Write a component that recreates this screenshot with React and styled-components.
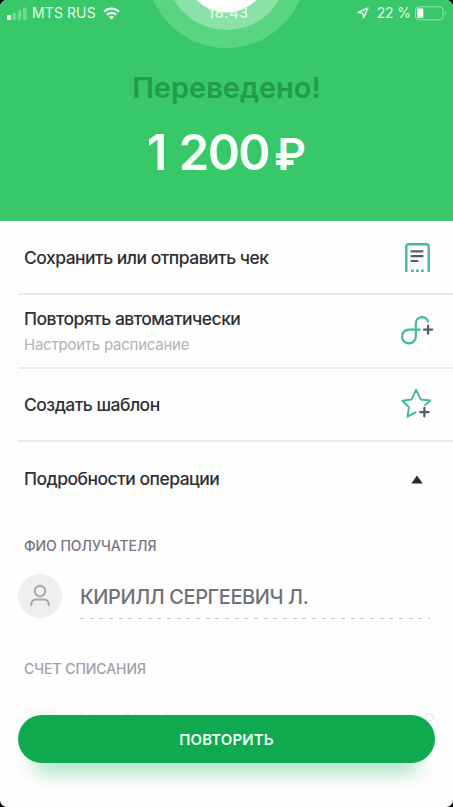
import React from 'react';
import styled, { createGlobalStyle } from 'styled-components';

const GlobalStyle = createGlobalStyle`
  * {
    box-sizing: border-box;
  }

  body {
    margin: 0;
    background: #000000;
    font-family: Inter, 'Liberation Sans', sans-serif;
  }
`;

const Screen = styled.div`
  position: relative;
  width: 453px;
  height: 807px;
  border-radius: 7px;
  overflow: hidden;
  background: #fefefe;
  display: flex;
  flex-direction: column;
`;

const Header = styled.header`
  position: relative;
  height: 221px;
  flex: none;
  background: #38c769;
  display: flex;
  flex-direction: column;
  align-items: center;
`;

const Rings = styled.svg`
  position: absolute;
  top: 0;
  left: 147px;
`;

const StatusBar = styled.div`
  position: relative;
  width: 100%;
  height: 26px;
  padding: 0 6px 0 7px;
  display: grid;
  grid-template-columns: 1fr auto 1fr;
  align-items: center;
  color: #e6fbec;
  font-size: 14px;
  line-height: 26px;
  white-space: nowrap;
`;

const StatusGroup = styled.div`
  display: flex;
  align-items: center;
  justify-content: ${(props) => props.$align || 'flex-start'};
`;

const Carrier = styled.span`
  margin: 0 7px 0 5px;
  letter-spacing: 0.1px;
`;

const Clock = styled.span`
  font-weight: 500;
  letter-spacing: 0.7px;
  margin-left: 3px;
`;

const Percent = styled.span`
  margin: 0 4px 0 8px;
  letter-spacing: -0.1px;
`;

const Title = styled.h1`
  margin: 43px 0 0;
  color: #249a4c;
  font-size: 29px;
  font-weight: 600;
  line-height: 38px;
`;

const Amount = styled.div`
  margin-top: 16px;
  color: #f6fff8;
  font-size: 49px;
  font-weight: 600;
  line-height: 60px;
  letter-spacing: -1.6px;
  word-spacing: 2px;
  white-space: nowrap;
`;

const Currency = styled.span`
  margin-left: 5px;
  font-size: 44px;
  letter-spacing: 0;
`;

const Row = styled.div`
  height: 73.75px;
  flex: none;
  margin-left: 18px;
  padding: ${(props) => (props.$last ? 0 : 2)}px 18px 0 6px;
  border-bottom: ${(props) => (props.$last ? 'none' : '2px solid #ebebeb')};
  display: flex;
  align-items: center;
  justify-content: space-between;
`;

const RowLabel = styled.div`
  color: #2f2f31;
  font-size: 17.5px;
  font-weight: 500;
  line-height: 24px;
  letter-spacing: -0.52px;
`;

const RowHint = styled.div`
  margin-top: 3px;
  color: #b3b3b3;
  font-size: 15px;
  line-height: 22px;
  letter-spacing: -0.23px;
`;

const IconBox = styled.span`
  width: 36px;
  height: 36px;
  display: flex;
  align-items: center;
  justify-content: center;
`;

const SectionTitle = styled.h2`
  margin: ${(props) => props.$top}px 0 0 24px;
  color: ${(props) => props.$color};
  font-size: 14px;
  font-weight: 500;
  line-height: 20px;
  letter-spacing: -0.05px;
`;

const Recipient = styled.div`
  display: flex;
  margin: 18px 23px 0 18px;
  height: 46px;
`;

const Avatar = styled.span`
  width: 44px;
  height: 44px;
  border-radius: 50%;
  background: #efefef;
  display: flex;
  align-items: center;
  justify-content: center;
`;

const RecipientField = styled.div`
  flex: 1;
  height: 45px;
  margin-left: 18px;
  color: #707078;
  font-size: 20px;
  font-weight: 500;
  line-height: 46px;
  letter-spacing: -0.41px;
  background: repeating-linear-gradient(90deg, #c2c2c5 0 4px, transparent 4px 9.67px) left bottom / 100% 1.5px no-repeat;
`;

const Account = styled.div`
  display: flex;
  align-items: flex-start;
  margin: 28px 18px 0 25px;
  color: #eaf0ec;
  font-size: 18px;
  line-height: 28px;
`;

const CardThumb = styled.span`
  width: 32px;
  height: 20px;
  margin: 2px 23px 0 0;
  border-radius: 3px;
  background: #f8f8f9;
`;

const AccountName = styled.span`
  flex: 1;
  letter-spacing: -0.3px;
`;

const RepeatButton = styled.button`
  position: absolute;
  left: 18px;
  bottom: 44px;
  width: 417px;
  height: 48px;
  padding: 0;
  border: none;
  border-radius: 24px;
  background: #0faa4f;
  color: #effff4;
  font-family: inherit;
  font-size: 15px;
  font-weight: 600;
  letter-spacing: 0.1px;
  box-shadow: 0 24px 20px -16px rgba(15, 170, 79, 0.45);
`;

const SignalIcon = () => (
  <svg width="20" height="13" viewBox="0 0 20 13" fill="#b9efc9">
    <rect x="0" y="8" width="4" height="5" rx="1" fill="#fff" />
    <rect x="5.5" y="5.5" width="3.7" height="7.5" rx="1" opacity="0.45" />
    <rect x="10.7" y="3" width="3.7" height="10" rx="1" opacity="0.45" />
    <rect x="16" y="0.5" width="3.7" height="12.5" rx="1" opacity="0.45" />
  </svg>
);

const WifiIcon = () => (
  <svg width="17" height="13" viewBox="0 0 17 13" fill="none" stroke="#effff4" strokeWidth="2.2">
    <path d="M1 4.6a10.8 10.8 0 0 1 15 0" />
    <path d="M3.8 7.7a6.8 6.8 0 0 1 9.4 0" />
    <path d="M5.9 9.9a3.8 3.8 0 0 1 5.2 0l-2.6 2.7z" fill="#effff4" stroke="none" />
  </svg>
);

const LocationIcon = () => (
  <svg width="12" height="12" viewBox="0 0 12 12" fill="none" stroke="#dcf9e5" strokeWidth="1.4" strokeLinejoin="round">
    <path d="M11 1L1 5.5l4.7.7L6.5 11z" />
  </svg>
);

const BatteryIcon = () => (
  <svg width="32" height="15" viewBox="0 0 32 15">
    <rect x="0.6" y="0.8" width="27.5" height="13" rx="3" fill="none" stroke="#9de5b4" />
    <rect x="2.3" y="2.6" width="6" height="9.4" rx="1" fill="#fff" />
    <path d="M30 5q2 2.3 0 4.6z" fill="#9de5b4" />
  </svg>
);

const ReceiptIcon = () => (
  <svg width="36" height="36" viewBox="0 0 36 36" fill="none">
    <path d="M7.3 32V6.5q0-2.2 2.2-2.2h18q2.2 0 2.2 2.2V32" stroke="#45b99c" strokeWidth="2.4" />
    <path d="M12.5 11.3h11M12.5 16.2h11M12.5 21h6" stroke="#565a6e" strokeWidth="2.2" strokeLinecap="round" />
    <path d="M12 30.8h2.7M17 30.8h2.7M22 30.8h2.7" stroke="#45b99c" strokeWidth="2.4" />
  </svg>
);

const RepeatIcon = () => (
  <svg width="36" height="36" viewBox="0 1 36 36" fill="none" strokeWidth="2.2" strokeLinecap="round">
    <path
      d="M29 8.5C27.2 2.2 16.8 2.5 16.8 11.5V23.5A6.9 6.9 0 1 1 9.9 16.6H21"
      stroke="#45ba96"
    />
    <path d="M25 16.6h8.2M29.1 12.5v8.2" stroke="#555a6e" />
  </svg>
);

const StarIcon = () => (
  <svg width="36" height="36" viewBox="0 -1 36 36" fill="none" strokeLinecap="round" strokeLinejoin="round">
    <path
      d="M26.2 17L31.3 12.5 21.8 11.6 17.2 1.8 12.5 11.6 3.3 12.7 10 19.2 8.5 28.7 16.4 24.4"
      stroke="#45ba9c"
      strokeWidth="2"
    />
    <path d="M21.2 24.1h8.4M25.4 19.9v8.4" stroke="#555a6e" strokeWidth="2.3" />
  </svg>
);

const PersonIcon = () => (
  <svg width="24" height="26" viewBox="0 0 24 26" fill="none" stroke="#aaaaac" strokeWidth="2">
    <circle cx="12" cy="8" r="5.2" />
    <path d="M3.3 23v-1.5q0-5 5-5h7.4q5 0 5 5V23" />
  </svg>
);

const CaretIcon = () => (
  <svg width="12" height="9" viewBox="0 0 12 9">
    <path d="M6 0.5L11.7 8.5H0.3z" fill="#29292b" />
  </svg>
);

const App = () => {
  return (
    <>
      <GlobalStyle />
      <Screen>
        <Header>
          <Rings width="160" height="50" viewBox="0 0 160 50">
            <circle cx="79.5" cy="-32" r="80" fill="#58d582" />
            <circle cx="79.5" cy="-31" r="61" fill="#8be1a7" />
            <circle cx="79.5" cy="-30" r="42.5" fill="#fff" />
          </Rings>
          <StatusBar>
            <StatusGroup>
              <SignalIcon />
              <Carrier>MTS RUS</Carrier>
              <WifiIcon />
            </StatusGroup>
            <Clock>18:43</Clock>
            <StatusGroup $align="flex-end">
              <LocationIcon />
              <Percent>22 %</Percent>
              <BatteryIcon />
            </StatusGroup>
          </StatusBar>
          <Title>Переведено!</Title>
          <Amount>1 200<Currency>₽</Currency></Amount>
        </Header>

        <Row>
          <RowLabel>Сохранить или отправить чек</RowLabel>
          <IconBox><ReceiptIcon /></IconBox>
        </Row>
        <Row>
          <div>
            <RowLabel>Повторять автоматически</RowLabel>
            <RowHint>Настроить расписание</RowHint>
          </div>
          <IconBox><RepeatIcon /></IconBox>
        </Row>
        <Row>
          <RowLabel>Создать шаблон</RowLabel>
          <IconBox><StarIcon /></IconBox>
        </Row>
        <Row $last>
          <RowLabel>Подробности операции</RowLabel>
          <IconBox><CaretIcon /></IconBox>
        </Row>

        <SectionTitle $top={20} $color="#76767c">ФИО ПОЛУЧАТЕЛЯ</SectionTitle>
        <Recipient>
          <Avatar><PersonIcon /></Avatar>
          <RecipientField>КИРИЛЛ СЕРГЕЕВИЧ Л.</RecipientField>
        </Recipient>
        <SectionTitle $top={39} $color="#a0a0a6">СЧЕТ СПИСАНИЯ</SectionTitle>
        <Account>
          <CardThumb />
          <AccountName>Visa Classic</AccountName>
          <span>₽</span>
        </Account>
        <RepeatButton>ПОВТОРИТЬ</RepeatButton>
      </Screen>
    </>
  );
};

export default App;
